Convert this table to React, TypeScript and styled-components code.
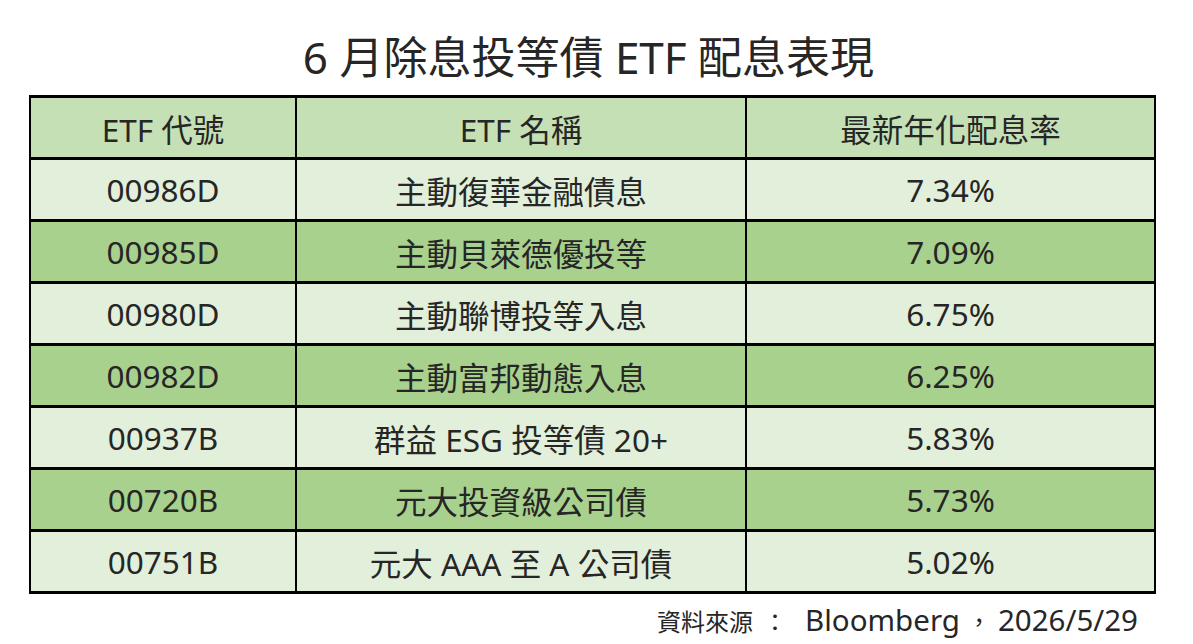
import React from "react";
import styled, { createGlobalStyle } from "styled-components";

const GlobalStyle = createGlobalStyle`
  html, body {
    margin: 0;
    padding: 0;
    background: #ffffff;
  }
  body {
    font-family: "Noto Sans", "Noto Sans CJK TC", sans-serif;
    color: #262626;
  }
`;

const Page = styled.div`
  width: 1193px;
  height: 644px;
  box-sizing: border-box;
  padding: 30px 0 0 29px;
  overflow: hidden;
`;

const Wrap = styled.div`
  width: 1127px;
  display: flex;
  flex-direction: column;
`;

const Title = styled.h1`
  margin: 0 0 11px;
  font-size: 44px;
  font-weight: 400;
  line-height: 54px;
  text-align: center;
  color: #262626;
  padding-right: 8px;
`;

const Grid = styled.div`
  display: grid;
  grid-template-columns: 264px 448px 407px;
  grid-auto-rows: 59px;
  column-gap: 2px;
  row-gap: 3px;
  padding: 3px 2px;
  background: #000000;
`;

type Tone = "head" | "light" | "dark";

const toneBg: Record<Tone, string> = {
  head: "#c5e0b4",
  light: "#e2efda",
  dark: "#a9d18e",
};

const Cell = styled.div<{ $tone: Tone }>`
  background: ${(p) => toneBg[p.$tone]};
  display: flex;
  align-items: center;
  justify-content: center;
  font-size: 31.5px;
  color: #262626;
  white-space: pre;
`;

const Footer = styled.div`
  margin-top: 7px;
  padding-right: 18px;
  text-align: right;
  line-height: 38px;
  color: #262626;
`;

const FootCjk = styled.span`
  font-size: 24px;
`;

const FootPunct = styled.span<{ $left: number; $right: number }>`
  font-size: 24px;
  padding: 0 ${(p) => p.$right}px 0 ${(p) => p.$left}px;
`;

const FootLatin = styled.span`
  font-size: 29.5px;
`;

const rows: [string, string, string][] = [
  ["00986D", "主動復華金融債息", "7.34%"],
  ["00985D", "主動貝萊德優投等", "7.09%"],
  ["00980D", "主動聯博投等入息", "6.75%"],
  ["00982D", "主動富邦動態入息", "6.25%"],
  ["00937B", "群益 ESG 投等債 20+", "5.83%"],
  ["00720B", "元大投資級公司債", "5.73%"],
  ["00751B", "元大 AAA 至 A 公司債", "5.02%"],
];

export default function App() {
  return (
    <>
      <GlobalStyle />
      <Page>
        <Wrap>
          <Title>6 月除息投等債 ETF 配息表現</Title>
          <Grid>
            <Cell $tone="head">ETF 代號</Cell>
            <Cell $tone="head">ETF 名稱</Cell>
            <Cell $tone="head">最新年化配息率</Cell>
            {rows.map((r, i) => {
              const tone: Tone = i % 2 === 0 ? "light" : "dark";
              return (
                <React.Fragment key={r[0]}>
                  <Cell $tone={tone}>{r[0]}</Cell>
                  <Cell $tone={tone}>{r[1]}</Cell>
                  <Cell $tone={tone}>{r[2]}</Cell>
                </React.Fragment>
              );
            })}
          </Grid>
          <Footer>
            <FootCjk>資料來源</FootCjk>
            <FootPunct $left={10} $right={18}>：</FootPunct>
            <FootLatin>Bloomberg</FootLatin>
            <FootPunct $left={7} $right={7}>，</FootPunct>
            <FootLatin>2026/5/29</FootLatin>
          </Footer>
        </Wrap>
      </Page>
    </>
  );
}
